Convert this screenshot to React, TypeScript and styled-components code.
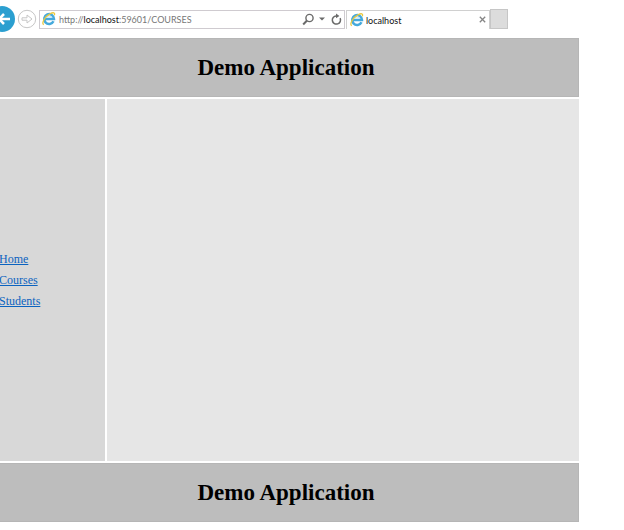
import React from "react";
import styled, { createGlobalStyle } from "styled-components";

const GlobalStyle = createGlobalStyle`
  * { box-sizing: border-box; }
  html, body { margin: 0; background: #fff; overflow-x: hidden; }
  body { font-family: "Liberation Serif", "Times New Roman", serif; color: #000; }
`;

const Shell = styled.div`
  display: flex;
  flex-direction: column;
  min-height: 100vh;
  padding-bottom: 8px;
`;

const BrowserBar = styled.header`
  display: flex;
  align-items: center;
  height: 38px;
  padding-right: 116px;
  font-family: Lato, "Open Sans", sans-serif;
  font-size: 9px;
  overflow: hidden;
`;

const IconButton = styled.button<{ $width: number }>`
  display: flex;
  flex: none;
  align-items: center;
  justify-content: center;
  width: ${(p) => p.$width}px;
  height: 18px;
  padding: 0;
  border: 0;
  background: none;
`;

const BackButton = styled(IconButton)`
  height: 26px;
  justify-content: flex-end;
`;

const ForwardButton = styled(IconButton)`
  margin: 0 2px;
  height: 20px;
`;

const AddressBar = styled.form`
  display: flex;
  flex: 1;
  align-items: center;
  gap: 3px;
  height: 19px;
  padding-left: 2px;
  border: 1px solid #cfcbd0;
`;

const AddressField = styled.label`
  position: relative;
  display: flex;
  flex: 1;
  align-items: center;
  height: 17px;
`;

const AddressInput = styled.input`
  width: 100%;
  padding: 0;
  border: 0;
  outline: 0;
  background: none;
  color: transparent;
  font: inherit;
`;

const AddressText = styled.span`
  position: absolute;
  left: 0;
  color: #777;
  line-height: 17px;
  white-space: nowrap;
  pointer-events: none;

  b { font-weight: 400; color: #111; }
`;

const Tab = styled.div`
  display: flex;
  flex: none;
  align-items: center;
  gap: 2px;
  width: 144px;
  height: 19px;
  margin-left: 1px;
  padding-left: 3px;
  border: 1px solid #d0d0d0;
  border-bottom: 0;
  color: #111;
`;

const TabTitle = styled.span`
  flex: 1;
  line-height: 19px;
  padding-top: 2px;
`;

const NewTab = styled.button`
  flex: none;
  width: 18px;
  height: 20px;
  padding: 0;
  border: 1px solid #c6c6c6;
  background: #dcdcdc;
`;

const Page = styled.div`
  display: flex;
  flex: 1;
  flex-direction: column;
  gap: 2px;
  margin-right: 45px;
`;

const Banner = styled.div`
  display: flex;
  flex: none;
  align-items: center;
  justify-content: center;
  height: 59px;
  padding-right: 6px;
  border: 1px solid #b6b6b6;
  border-left: 0;
  background: #bdbdbd;
`;

const Title = styled.h1`
  margin: 0;
  font-size: 23px;
  line-height: 26px;
`;

const Body = styled.div`
  display: grid;
  flex: 1;
  grid-template-columns: 105px 1fr;
  gap: 2px;
`;

const Sidebar = styled.nav`
  display: flex;
  flex-direction: column;
  align-items: flex-start;
  justify-content: center;
  gap: 5px;
  margin-left: -1px;
  background: #d8d8d8;
`;

const NavLink = styled.a`
  color: #0b63c0;
  font-size: 12px;
  line-height: 16px;
  text-decoration: underline;
`;

const Content = styled.main`
  background: #e6e6e6;
`;

const BrowserIcon = () => (
  <svg width="14" height="14" viewBox="0 0 14 14" fill="none" aria-hidden="true">
    <path d="M11.5 9.2A4.9 4.9 0 1 1 12 7H3.5" stroke="#45a9dc" strokeWidth="2.5" />
    <path d="M4 6.1C4.8 3.6 8.5 3.3 9.7 5.8" stroke="#b5e1f5" strokeWidth="1" />
    <path d="M1.7 12.8C-.8 11 3.1 4.2 8 1.8c3.2-1.7 5.4-1.4 4.3 1.4" stroke="#e9c83d" strokeWidth="1.3" />
  </svg>
);

const links = [
  { label: "Home", href: "#home" },
  { label: "Courses", href: "#courses" },
  { label: "Students", href: "#students" },
];

export default function App() {
  return (
    <Shell>
      <GlobalStyle />
      <BrowserBar>
        <BackButton $width={15} aria-label="Back">
          <svg width="15" height="26" viewBox="0 0 15 26" fill="none">
            <circle cx="2" cy="13" r="13" fill="#2b9fd0" />
            <path d="M10 13H-2M4 8l-5 5 5 5" stroke="#fff" strokeWidth="2.6" />
          </svg>
        </BackButton>
        <ForwardButton $width={20} aria-label="Forward">
          <svg width="20" height="20" viewBox="0 0 20 20" fill="none" stroke="#c6c6c6">
            <circle cx="10" cy="10" r="8.7" />
            <path d="M5 8.8h5V6l5 4-5 4v-2.8H5z" strokeLinejoin="round" />
          </svg>
        </ForwardButton>
        <AddressBar onSubmit={(e) => e.preventDefault()}>
          <BrowserIcon />
          <AddressField>
            <AddressInput aria-label="Address" />
            <AddressText>
              http://<b>localhost</b>:59601/COURSES
            </AddressText>
          </AddressField>
          <IconButton $width={13} type="submit" aria-label="Search">
            <svg width="13" height="13" viewBox="0 0 13 13" fill="none" stroke="#6a6a6a">
              <circle cx="7.5" cy="5" r="3.6" strokeWidth="1.4" />
              <path d="M5 7.5L1.2 11.5" strokeWidth="2" />
            </svg>
          </IconButton>
          <IconButton $width={8} type="button" aria-label="Address history">
            <svg width="6" height="4" viewBox="0 0 6 4">
              <path d="M0 .5h6L3 3.5z" fill="#6a6a6a" />
            </svg>
          </IconButton>
          <IconButton $width={15} type="button" aria-label="Refresh">
            <svg width="13" height="13" viewBox="0 0 13 13" fill="none">
              <path d="M10.1 5.2A4.1 4.1 0 1 1 6.2 2.9" stroke="#6a6a6a" strokeWidth="1.5" />
              <path d="M6 .6l3.4 2.3L6 5.2z" fill="#6a6a6a" />
            </svg>
          </IconButton>
        </AddressBar>
        <Tab>
          <BrowserIcon />
          <TabTitle>localhost</TabTitle>
          <IconButton $width={14} aria-label="Close tab">
            <svg width="7" height="7" viewBox="0 0 7 7" stroke="#858585" strokeWidth="1.3">
              <path d="M.8.8l5.4 5.4M6.2.8L.8 6.2" />
            </svg>
          </IconButton>
        </Tab>
        <NewTab aria-label="New tab" />
      </BrowserBar>
      <Page>
        <Banner as="header">
          <Title>Demo Application</Title>
        </Banner>
        <Body>
          <Sidebar>
            {links.map((l) => (
              <NavLink key={l.label} href={l.href}>
                {l.label}
              </NavLink>
            ))}
          </Sidebar>
          <Content />
        </Body>
        <Banner as="footer">
          <Title as="h2">Demo Application</Title>
        </Banner>
      </Page>
    </Shell>
  );
}
